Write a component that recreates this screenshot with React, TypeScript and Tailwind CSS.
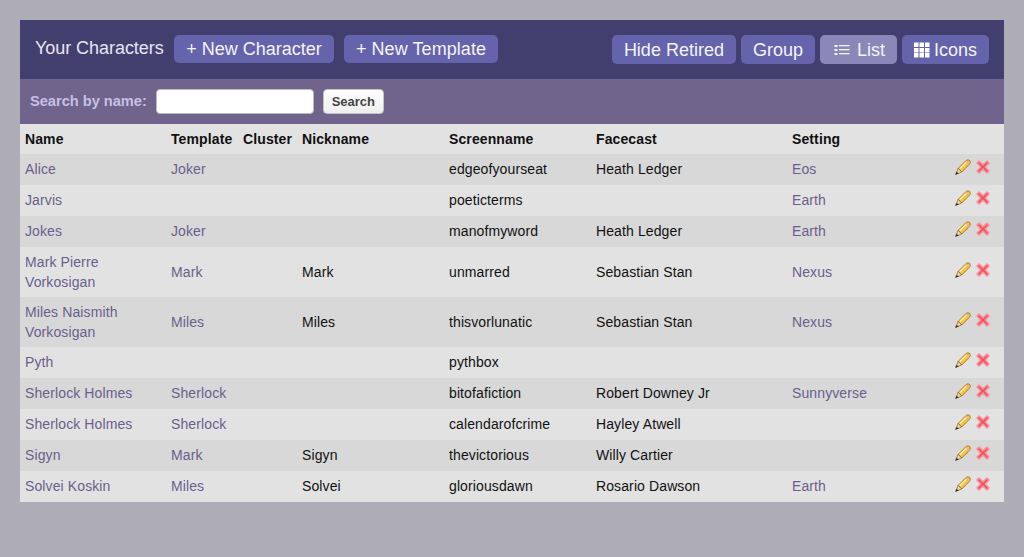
type Row = {
  name: string
  template?: string
  nickname?: string
  screenname: string
  facecast?: string
  setting?: string
  tall?: boolean
}

const rows: Row[] = [
  { name: 'Alice', template: 'Joker', screenname: 'edgeofyourseat', facecast: 'Heath Ledger', setting: 'Eos' },
  { name: 'Jarvis', screenname: 'poeticterms', setting: 'Earth' },
  { name: 'Jokes', template: 'Joker', screenname: 'manofmyword', facecast: 'Heath Ledger', setting: 'Earth' },
  { name: 'Mark Pierre Vorkosigan', template: 'Mark', nickname: 'Mark', screenname: 'unmarred', facecast: 'Sebastian Stan', setting: 'Nexus', tall: true },
  { name: 'Miles Naismith Vorkosigan', template: 'Miles', nickname: 'Miles', screenname: 'thisvorlunatic', facecast: 'Sebastian Stan', setting: 'Nexus', tall: true },
  { name: 'Pyth', screenname: 'pythbox' },
  { name: 'Sherlock Holmes', template: 'Sherlock', screenname: 'bitofafiction', facecast: 'Robert Downey Jr', setting: 'Sunnyverse' },
  { name: 'Sherlock Holmes', template: 'Sherlock', screenname: 'calendarofcrime', facecast: 'Hayley Atwell' },
  { name: 'Sigyn', template: 'Mark', nickname: 'Sigyn', screenname: 'thevictorious', facecast: 'Willy Cartier' },
  { name: 'Solvei Koskin', template: 'Miles', nickname: 'Solvei', screenname: 'gloriousdawn', facecast: 'Rosario Dawson', setting: 'Earth' },
]

function PencilIcon() {
  return (
    <svg width="16" height="16" viewBox="0 0 16 16" className="block">
      <path d="M3.2 9.4 L11.2 1.4 Q13 0.2 14.7 1.5 Q16 3.2 14.7 5 L6.7 13 Z" fill="#f6c63f" stroke="#a9762a" strokeWidth="1" />
      <path d="M11 2.2 L14 5.2" stroke="#eab48c" strokeWidth="2" />
      <path d="M4.8 9.6 L11.4 3.2" stroke="#fff0b4" strokeWidth="1.4" />
      <path d="M3.2 9.4 L0.6 15.4 L6.7 13 Z" fill="#efd6ac" stroke="#8a6a3a" strokeWidth="0.8" />
      <path d="M0.4 15.8 L1.6 12.7 L3.6 14.6 Z" fill="#3a2c1a" />
    </svg>
  )
}

function CrossIcon() {
  return (
    <svg width="16" height="16" viewBox="0 0 16 16" className="block">
      <path d="M2 4 L4 2 L8 5.8 L12 2 L14 4 L10.2 8 L14 12 L12 14 L8 10.2 L4 14 L2 12 L5.8 8 Z" fill="#f24c58" stroke="#f7929a" strokeWidth="1.6" strokeLinejoin="round" />
    </svg>
  )
}

function HeaderButton({ children, active }: { children: React.ReactNode; active?: boolean }) {
  return (
    <button className={'flex h-[29px] items-center rounded-[5px] px-3 text-[18px] leading-none text-[#f4f4fa] ' + (active ? 'bg-[#8a88b8]' : 'bg-[#6563ab]')}>
      {children}
    </button>
  )
}

function ListIcon() {
  return (
    <svg width="16" height="12" viewBox="0 0 16 12" fill="#f4f4fa" className="mr-[7px] ml-[2px] block">
      <rect x="0.5" y="1" width="3" height="2" />
      <rect x="0.5" y="5" width="3" height="2" />
      <rect x="0.5" y="9" width="3" height="2" />
      <rect x="5" y="1" width="10.5" height="1.3" />
      <rect x="5" y="5" width="10.5" height="1.3" />
      <rect x="5" y="9" width="10.5" height="1.3" />
    </svg>
  )
}

function GridIcon() {
  return (
    <svg width="16" height="16" viewBox="0 0 16 16" fill="#ffffff" className="mr-1 block">
      {[0, 5.5, 11].map(x =>
        [0.5, 6, 11].map(y => <rect key={x + '-' + y} x={x} y={y} width="4.5" height="4.5" />)
      )}
    </svg>
  )
}

export default function App() {
  const cell = 'px-[5px] '
  return (
    <div className="h-[557px] bg-[#aeacb6] px-5 pt-5 font-['Liberation_Sans',Arial,sans-serif]">
      {/* Title bar */}
      <div className="flex h-[59px] items-start justify-between bg-[#423f6f] pt-[15px] pr-[15px] pl-[15px]">
        <div className="flex items-center">
          <span className="mr-[10px] w-[129px] pb-[2px] text-[18px] leading-[26px] tracking-[-0.05px] text-[#e6e5f2]">Your Characters</span>
          <button className="mr-[10px] flex h-[28px] w-[160px] items-center justify-center rounded-[5px] bg-[#6563ab] text-[18px] leading-none text-[#f4f4fa]">
            + New Character
          </button>
          <button className="flex h-[28px] w-[154px] items-center justify-center rounded-[5px] bg-[#6563ab] text-[18px] leading-none tracking-[0.07px] text-[#f4f4fa]">
            + New Template
          </button>
        </div>
        <div className="flex gap-[5px]">
          <HeaderButton>Hide Retired</HeaderButton>
          <HeaderButton>Group</HeaderButton>
          <HeaderButton active>
            <ListIcon />
            List
          </HeaderButton>
          <HeaderButton>
            <GridIcon />
            Icons
          </HeaderButton>
        </div>
      </div>

      {/* Search */}
      <div className="flex h-[45px] items-center bg-[#70648c] pl-[10px]">
        <span className="mr-[9px] text-[14.6px] font-bold text-[#c6c0e4]">Search by name:</span>
        <input className="mr-[9px] h-[25px] w-[158px] rounded-[4px] border border-[#bbbbbb] bg-white" />
        <button className="h-[25px] w-[61px] rounded-[4px] border border-[#c4c4c4] bg-gradient-to-b from-white to-[#eeeeee] text-[13px] font-bold text-[#444444]">
          Search
        </button>
      </div>

      {/* Table */}
      <table className="w-full table-fixed border-collapse text-left text-[14px] leading-[20px] tracking-[0.11px] text-[#111111]">
        <colgroup>
          <col className="w-[146px]" />
          <col className="w-[72px]" />
          <col className="w-[59px]" />
          <col className="w-[147px]" />
          <col className="w-[147px]" />
          <col className="w-[196px]" />
          <col className="w-[160px]" />
          <col />
        </colgroup>
        <thead>
          <tr className="h-[30px] bg-[#e2e2e2] font-bold">
            <th className={cell}>Name</th>
            <th className={cell}>Template</th>
            <th className={cell}>Cluster</th>
            <th className={cell}>Nickname</th>
            <th className={cell}>Screenname</th>
            <th className={cell}>Facecast</th>
            <th className={cell}>Setting</th>
            <th />
          </tr>
        </thead>
        <tbody>
          {rows.map((r, i) => {
            const pad = cell + (r.tall ? '' : 'pb-[2px] ')
            return (
              <tr key={i} className={(i % 2 === 0 ? 'bg-[#d8d8d8] ' : 'bg-[#e2e2e2] ') + (r.tall ? 'h-[50px]' : 'h-[31px]')}>
                <td className={pad + 'text-[#6a5f8c]'}>{r.name}</td>
                <td className={pad + 'text-[#6a5f8c]'}>{r.template}</td>
                <td className={pad} />
                <td className={pad}>{r.nickname}</td>
                <td className={pad}>{r.screenname}</td>
                <td className={pad}>{r.facecast}</td>
                <td className={pad + 'text-[#6a5f8c]'}>{r.setting}</td>
                <td className="align-middle">
                  <div className="mb-[5px] flex gap-[4px] pl-[8px]">
                    <PencilIcon />
                    <CrossIcon />
                  </div>
                </td>
              </tr>
            )
          })}
        </tbody>
      </table>
    </div>
  )
}
